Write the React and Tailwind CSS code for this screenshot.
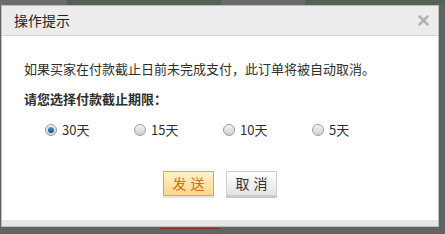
const FONT = { fontFamily: '"Noto Sans CJK SC", "Liberation Sans", sans-serif' };

const options = [
  { label: "30天", checked: true },
  { label: "15天" },
  { label: "10天" },
  { label: "5天" },
];

function Radio({ checked }) {
  return (
    <span className="relative flex h-[12px] w-[12px] items-center justify-center rounded-full border border-[#9c9c9c] bg-gradient-to-b from-[#f4f4f4] to-[#cfcfcf]">
      {checked && (
        <span className="h-[6px] w-[6px] rounded-full bg-gradient-to-b from-[#4aa3e0] to-[#0a4f8f]" />
      )}
    </span>
  );
}

export default function App() {
  return (
    <div className="flex h-[234px] w-[445px] flex-col overflow-hidden bg-[#616462]" style={FONT}>
      <div className="flex h-[5px] shrink-0">
        <div className="w-[67px] bg-[#6c6c6c]" />
        <div className="w-[154px] bg-[#566056]" />
        <div className="w-[84px] bg-[#6a6a6a]" />
        <div className="flex-1 bg-[#566056]" />
      </div>
      <div className="ml-[1px] w-[438px] border border-[#bdbdbd] bg-white">
        <div className="flex h-[30px] items-center justify-between border-b border-[#d4d4d4] bg-[#ececec] pl-[12px] pr-[9px]">
          <span className="text-[14px] text-[#1e1e1e]">操作提示</span>
          <svg width="11" height="11" viewBox="0 0 11 11">
            <path d="M1.5 1.5 L9.5 9.5 M9.5 1.5 L1.5 9.5" stroke="#b3b3b3" strokeWidth="2.6" strokeLinecap="round" />
          </svg>
        </div>
        <div className="pl-[22px] pt-[23px] text-[13px] text-[#2e2e2e]">
          <p className="leading-[20px]">如果买家在付款截止日前未完成支付，此订单将被自动取消。</p>
          <p className="mt-[10px] font-bold leading-[20px]">请您选择付款截止期限：</p>
          <div className="ml-[21px] mt-[11px] flex h-[20px] items-center">
            {options.map((o) => (
              <label key={o.label} className="flex w-[89px] items-center gap-[5px]">
                <Radio checked={o.checked} />
                <span className="leading-[20px]">{o.label}</span>
              </label>
            ))}
          </div>
        </div>
        <div className="mt-[31px] flex justify-center gap-[12px]">
          <button className="flex h-[25px] w-[51px] items-center justify-center border border-[#e9a339] bg-gradient-to-b from-[#fff3c9] to-[#ffd788] pl-[4px] text-[14px] tracking-[4px] text-[#c9720f] shadow-[0_2px_0_#e6e6e6]">
            发送
          </button>
          <button className="flex h-[25px] w-[51px] items-center justify-center border border-[#cfcfcf] bg-gradient-to-b from-[#ffffff] to-[#e3e3e3] pl-[4px] text-[14px] tracking-[4px] text-[#333] shadow-[0_2px_0_#c9c9c9]">
            取消
          </button>
        </div>
        <div className="mt-[24px] h-[6px] bg-[#e7e7e7]" />
      </div>
      <div className="ml-[160px] mt-[1px] h-[1px] w-[60px] bg-[#7a3418]" />
    </div>
  );
}
